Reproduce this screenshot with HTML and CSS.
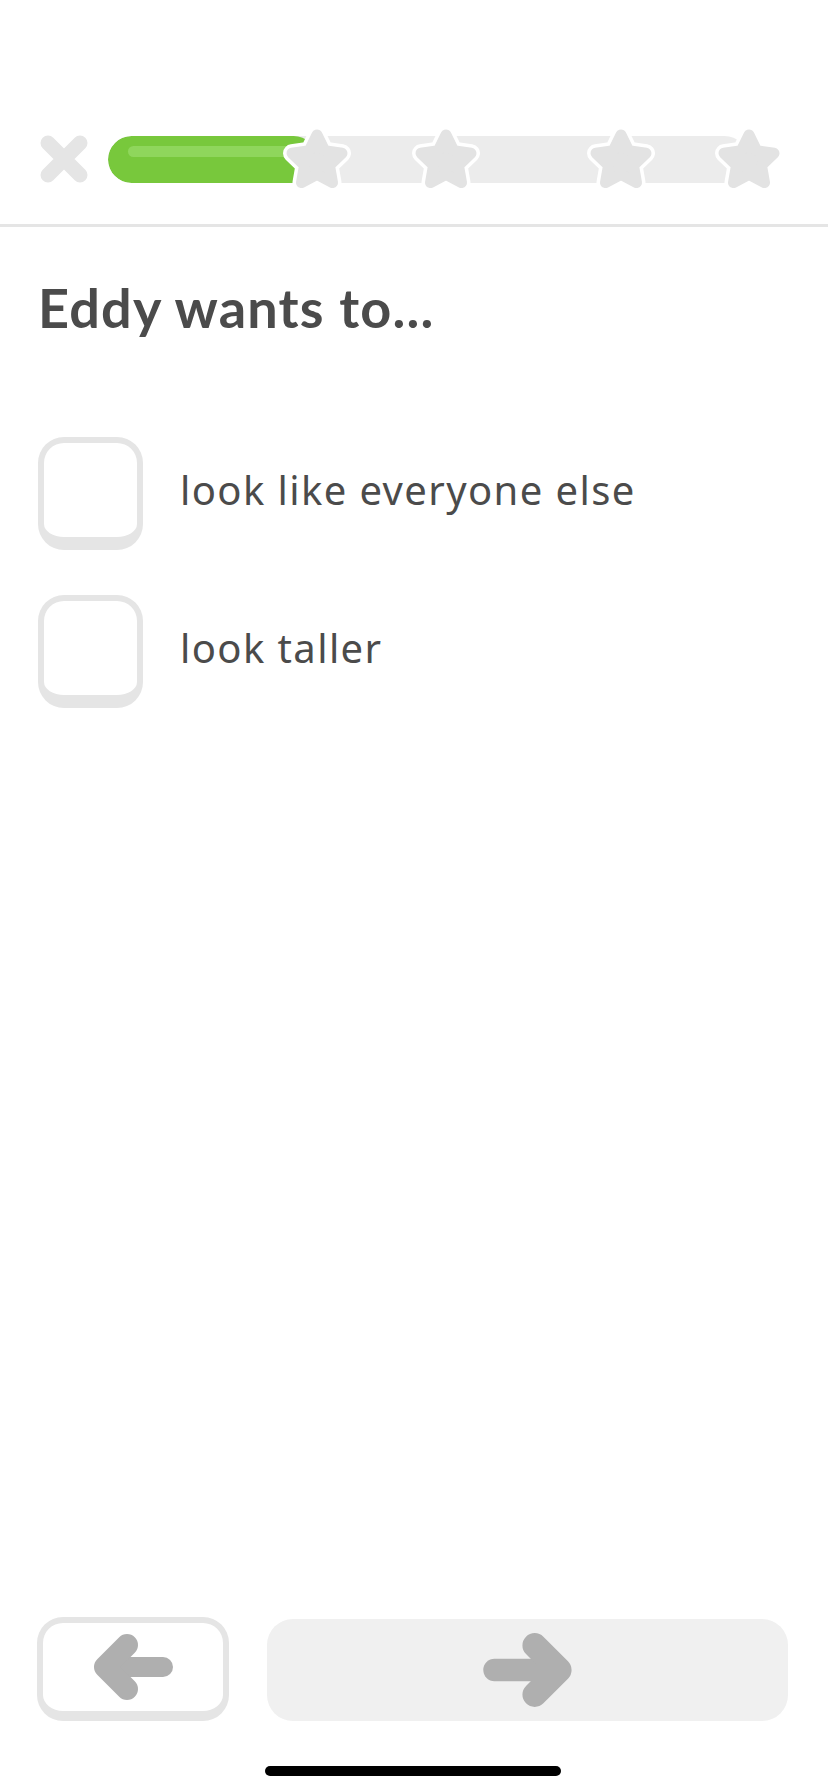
FILE: index.html
```html
<!DOCTYPE html>
<html lang="en">
<head>
    <meta charset="UTF-8">
    <meta name="viewport" content="width=device-width, initial-scale=1.0">
    <title>Eddy wants to...</title>
    <link rel="stylesheet" href="styles.css">
</head>
<body>
<div class="page">
    <!-- Header: close + lesson progress -->
    <header class="top">
        <div class="top-row">
            <svg class="close" width="48" height="48" viewBox="0 0 48 48">
                <path d="M8 8 L40 40 M40 8 L8 40" stroke="#e5e5e5" stroke-width="15" stroke-linecap="round" fill="none"/>
            </svg>
            <div class="progress">
                <div class="track">
                    <div class="fill" style="width: 209px;">
                        <div class="shine"></div>
                    </div>
                </div>
                <svg class="star" style="left: 175px;" viewBox="0 0 68 66"><use href="#star-shape"/></svg>
                <svg class="star" style="left: 304px;" viewBox="0 0 68 66"><use href="#star-shape"/></svg>
                <svg class="star" style="left: 479px;" viewBox="0 0 68 66"><use href="#star-shape"/></svg>
                <svg class="star" style="left: 607px;" viewBox="0 0 68 66"><use href="#star-shape"/></svg>
            </div>
        </div>
    </header>

    <!-- Question -->
    <main class="content">
        <h1 class="question">Eddy wants to...</h1>
        <ul class="options">
            <li class="option">
                <span class="check"></span>
                <span class="label">look like everyone else</span>
            </li>
            <li class="option">
                <span class="check"></span>
                <span class="label">look taller</span>
            </li>
        </ul>
    </main>

    <!-- Navigation -->
    <footer class="bottom">
        <div class="nav">
            <button class="btn btn-back">
                <svg width="84" height="68" viewBox="0 0 84 68">
                    <path d="M16 34 L72 34" stroke="#afafaf" stroke-width="20" stroke-linecap="round" fill="none"/>
                    <path d="M36 12 L14 34 L36 56" stroke="#afafaf" stroke-width="22" stroke-linecap="round" stroke-linejoin="round" fill="none"/>
                </svg>
            </button>
            <button class="btn btn-next">
                <svg width="94" height="76" viewBox="0 0 84 68">
                    <path d="M12 34 L68 34" stroke="#afafaf" stroke-width="20" stroke-linecap="round" fill="none"/>
                    <path d="M48 12 L70 34 L48 56" stroke="#afafaf" stroke-width="22" stroke-linecap="round" stroke-linejoin="round" fill="none"/>
                </svg>
            </button>
        </div>
        <div class="home-bar"></div>
    </footer>
</div>

<svg width="0" height="0" class="defs">
    <defs>
        <g id="star-shape">
            <path d="M34 9 L41.7 24.7 L59 27.2 L46.5 39.4 L49.5 56.6 L34 48.5 L18.5 56.6 L21.5 39.4 L9 27.2 L26.3 24.7 Z" fill="#fff" stroke="#fff" stroke-width="18" stroke-linejoin="round"/>
            <path d="M34 9 L41.7 24.7 L59 27.2 L46.5 39.4 L49.5 56.6 L34 48.5 L18.5 56.6 L21.5 39.4 L9 27.2 L26.3 24.7 Z" fill="#e3e3e3" stroke="#e3e3e3" stroke-width="11" stroke-linejoin="round"/>
        </g>
    </defs>
</svg>
</body>
</html>
```

FILE: styles.css
```css
body {
    margin: 0;
    background: #fff;
    font-family: 'Noto Sans', sans-serif;
    color: #4b4b4b;
}

.page {
    height: 100vh;
    display: flex;
    flex-direction: column;
}

.defs {
    position: absolute;
}

/* Header */
.top {
    padding: 127px 40px 33px 40px;
    border-bottom: 3px solid #e5e5e5;
}
.top-row {
    display: flex;
    align-items: center;
    height: 64px;
    gap: 20px;
}
.close {
    flex: none;
}
.progress {
    position: relative;
    flex: 1;
    height: 64px;
    display: flex;
    align-items: center;
}
.track {
    width: 640px;
    height: 47px;
    border-radius: 24px;
    background: #ececec;
    overflow: hidden;
}
.fill {
    height: 100%;
    background: #78c83c;
    border-radius: 24px;
    padding: 10px 0 0 20px;
    box-sizing: border-box;
}
.shine {
    height: 11px;
    border-radius: 6px;
    background: #8fd65c;
}
.star {
    position: absolute;
    top: -1px;
    width: 68px;
    height: 66px;
}

/* Question */
.content {
    flex: 1;
    padding: 0 40px 0 38px;
}
.question {
    margin: 49px 0 0 0;
    font-family: 'Lato', sans-serif;
    font-weight: 700;
    font-size: 54px;
    line-height: 64px;
    letter-spacing: 1.2px;
}
.options {
    list-style: none;
    margin: 97px 0 0 0;
    padding: 0;
    display: flex;
    flex-direction: column;
    gap: 45px;
}
.option {
    display: flex;
    align-items: center;
    gap: 37px;
}
.check {
    width: 105px;
    height: 113px;
    box-sizing: border-box;
    border: 6px solid #e5e5e5;
    border-bottom-width: 13px;
    border-radius: 26px;
    flex: none;
}
.label {
    font-size: 40px;
    line-height: 48px;
    letter-spacing: 1.4px;
    padding-bottom: 8px;
}

/* Bottom navigation */
.bottom {
    padding: 0 40px 16px 37px;
}
.nav {
    display: flex;
    align-items: flex-end;
    gap: 38px;
}
.btn {
    display: flex;
    justify-content: center;
    align-items: center;
    padding: 0;
    margin: 0;
    border-radius: 26px;
    font: inherit;
}
.btn-back {
    width: 192px;
    height: 104px;
    background: #fff;
    border: 6px solid #e5e5e5;
    border-bottom-width: 10px;
}
.btn-next {
    flex: 1;
    height: 102px;
    background: #f0f0f0;
    border: none;
}
.home-bar {
    width: 296px;
    height: 10px;
    border-radius: 5px;
    background: #000;
    margin: 45px auto 0 auto;
}
```
